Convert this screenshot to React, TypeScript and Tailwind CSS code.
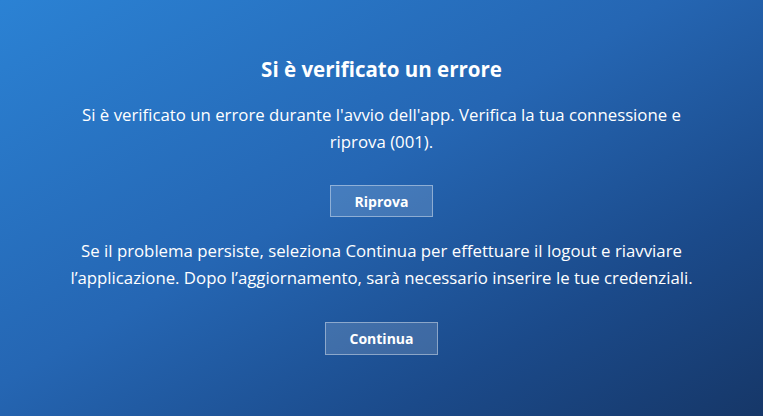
import React from 'react';

export default function App() {
  return (
    <div className="w-[763px] h-[416px] bg-[linear-gradient(150deg,#2b82d4_0%,#2566b3_45%,#1b4a8a_75%,#163768_100%)] text-white font-['Open_Sans',sans-serif] flex flex-col items-center">
      <h1 className="mt-[55px] text-[20.5px] font-bold leading-[28px]">Si è verificato un errore</h1>
      <p className="mt-[18px] w-[630px] text-center text-[16.8px] leading-[27px]">
        Si è verificato un errore durante l'avvio dell'app. Verifica la tua connessione e riprova (001).
      </p>
      <button className="mt-[30px] w-[103px] h-[32px] border border-white/40 bg-white/15 text-[14px] font-bold">
        Riprova
      </button>
      <p className="mt-[20px] w-[630px] text-center text-[16.8px] leading-[27px]">
        Se il problema persiste, seleziona Continua per effettuare il logout e riavviare l’applicazione. Dopo l’aggiornamento, sarà necessario inserire le tue credenziali.
      </p>
      <button className="mt-[31px] w-[113px] h-[33px] border border-white/40 bg-white/15 text-[14px] font-bold">
        Continua
      </button>
    </div>
  );
}
